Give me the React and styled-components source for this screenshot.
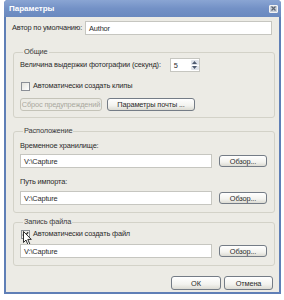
import React from "react";
import styled, { createGlobalStyle } from "styled-components";

const Global = createGlobalStyle`
  html, body { margin: 0; padding: 0; background: #ffffff; }
  body {
    font-family: "Liberation Sans", Arial, sans-serif;
    font-size: 7.4px;
    letter-spacing: -0.15px;
    color: #2a2a2a;
  }
  * { box-sizing: border-box; }
`;

const Window = styled.div`
  margin-left: 4px;
  width: 277px;
  height: 294px;
  background: #5f7fb6;
  border-radius: 4px 4px 0 0;
  padding: 0 2px 2px;
  display: flex;
  flex-direction: column;
`;

const TitleBar = styled.div`
  height: 17px;
  margin: 0 -2px;
  border-radius: 4px 4px 0 0;
  background: linear-gradient(#8aa5d3, #7391c6 50%, #6a89bf);
  display: flex;
  align-items: center;
  justify-content: space-between;
  padding: 0 3px 0 5px;
`;

const Title = styled.span`
  color: #ffffff;
  font-weight: bold;
  font-size: 8px;
  letter-spacing: 0;
`;

const CloseBtn = styled.div`
  width: 9px;
  height: 8px;
  border: 1px solid #f4f4f4;
  border-radius: 1px;
  background: #c9cfd9;
  display: flex;
  align-items: center;
  justify-content: center;
`;

const Body = styled.div`
  flex: 1;
  background: #ecebe5;
  padding: 4px 7px 2px 6px;
  display: flex;
  flex-direction: column;
`;

const Row = styled.div`
  display: flex;
  align-items: center;
  justify-content: ${p => (p.$spread ? "space-between" : "flex-start")};
  height: ${p => p.$h || 14}px;
  margin-top: ${p => p.$mt || 0}px;
  gap: ${p => p.$gap || 0}px;
  position: relative;
`;

const Label = styled.span`
  white-space: nowrap;
  line-height: 10px;
`;

const Input = styled.div`
  width: ${p => p.$w}px;
  height: 14px;
  background: #ffffff;
  border: 1px solid #c6c6c0;
  padding-left: 3px;
  display: flex;
  align-items: center;
  white-space: nowrap;
`;

const Group = styled.fieldset`
  margin: ${p => p.$mt}px 0 0 1px;
  width: 262px;
  border: 1px solid #d3d2c8;
  border-radius: 3px;
  padding: ${p => p.$pt}px 6px ${p => p.$pb}px 6px;
  min-width: 0;
`;

const Legend = styled.legend`
  padding: 0 1px;
  margin-left: 3px;
  line-height: 10px;
  height: 10px;
  color: #3a3a3a;
`;

const Button = styled.div`
  width: ${p => p.$w}px;
  height: ${p => p.$h || 13}px;
  border: 1px solid ${p => (p.$disabled ? "#c4c3b8" : "#747c86")};
  border-radius: 3px;
  background: ${p =>
    p.$disabled ? "#ecebe5" : "linear-gradient(#ffffff, #f3f3ef 60%, #dcdbd3)"};
  color: ${p => (p.$disabled ? "#a9a89e" : "#2a2a2a")};
  display: flex;
  align-items: center;
  justify-content: center;
  white-space: nowrap;
`;

const Check = styled.div`
  width: 9px;
  height: 9px;
  border: 1px solid #8b8f96;
  background: linear-gradient(135deg, #e4e3dc, #ffffff);
  margin: 0 3px 0 1px;
  display: flex;
  align-items: center;
  justify-content: center;
`;

const Spin = styled.div`
  margin-left: 9px;
  width: 30px;
  height: 14px;
  background: #ffffff;
  border: 1px solid #c6c6c0;
  display: flex;
  align-items: stretch;
`;

const SpinValue = styled.span`
  flex: 1;
  padding-left: 3px;
  display: flex;
  align-items: center;
`;

const SpinArrows = styled.div`
  width: 8px;
  display: flex;
  flex-direction: column;
  gap: 1px;
  padding: 1px 0;
`;

const SpinArrow = styled.div`
  flex: 1;
  background: #dfe3ea;
  border-radius: 1px;
  display: flex;
  align-items: center;
  justify-content: center;
`;

const Footer = styled.div`
  display: flex;
  justify-content: flex-end;
  gap: 3px;
  margin-top: auto;
  margin-right: -1px;
`;

const Cursor = styled.svg`
  position: absolute;
  left: 3px;
  top: 4px;
`;

function Arrow({ up }) {
  return (
    <svg width="5" height="3" viewBox="0 0 5 3">
      <path d={up ? "M0 3 L2.5 0 L5 3Z" : "M0 0 L2.5 3 L5 0Z"} fill="#4d5a70" />
    </svg>
  );
}

export default function App() {
  return (
    <>
      <Global />
      <Window>
        <TitleBar>
          <Title>Параметры</Title>
          <CloseBtn>
            <svg width="5" height="5" viewBox="0 0 5 5">
              <path d="M0.5 0.5 L4.5 4.5 M4.5 0.5 L0.5 4.5" stroke="#5a6372" strokeWidth="1.2" />
            </svg>
          </CloseBtn>
        </TitleBar>
        <Body>
          <Row $spread>
            <Label>Автор по умолчанию:</Label>
            <Input $w={187}>Author</Input>
          </Row>

          <Group $mt={12} $pt={1} $pb={6}>
            <Legend>Общие</Legend>
            <Row>
              <Label>Величина выдержки фотографии (секунд):</Label>
              <Spin>
                <SpinValue>5</SpinValue>
                <SpinArrows>
                  <SpinArrow><Arrow up /></SpinArrow>
                  <SpinArrow><Arrow /></SpinArrow>
                </SpinArrows>
              </Spin>
            </Row>
            <Row $mt={7}>
              <Check />
              <Label>Автоматически создать клипы</Label>
            </Row>
            <Row $mt={4} $gap={5}>
              <Button $w={82} $disabled>Сброс предупреждений</Button>
              <Button $w={88}>Параметры почты ...</Button>
            </Row>
          </Group>

          <Group $mt={8} $pt={5} $pb={7}>
            <Legend>Расположение</Legend>
            <Row $h={10}>
              <Label>Временное хранилище:</Label>
            </Row>
            <Row $mt={3} $gap={7}>
              <Input $w={192}>V:\Capture</Input>
              <Button $w={48} $h={12}>Обзор...</Button>
            </Row>
            <Row $h={10} $mt={9}>
              <Label>Путь импорта:</Label>
            </Row>
            <Row $mt={4} $gap={7}>
              <Input $w={192}>V:\Capture</Input>
              <Button $w={48} $h={12}>Обзор...</Button>
            </Row>
          </Group>

          <Group $mt={4} $pt={0} $pb={7}>
            <Legend>Запись файла</Legend>
            <Row>
              <Check>
                <svg width="7" height="7" viewBox="0 0 7 7">
                  <path d="M0.8 3.5 L2.6 5.4 L6.2 1.2" fill="none" stroke="#3a3a3a" strokeWidth="1.4" />
                </svg>
              </Check>
              <Label>Автоматически создать файл</Label>
              <Cursor width="9" height="15" viewBox="0 0 9 15">
                <path d="M0.5 0.5 L0.5 11.5 L3 9 L5 13.8 L6.8 13 L4.8 8.4 L8.3 8.4 Z" fill="#ffffff" stroke="#1a1a1a" strokeWidth="0.9" strokeLinejoin="round" />
              </Cursor>
            </Row>
            <Row $mt={3} $gap={7}>
              <Input $w={192}>V:\Capture</Input>
              <Button $w={48} $h={12}>Обзор...</Button>
            </Row>
          </Group>

          <Footer>
            <Button $w={50} $h={14}>ОК</Button>
            <Button $w={49} $h={14}>Отмена</Button>
          </Footer>
        </Body>
      </Window>
    </>
  );
}
